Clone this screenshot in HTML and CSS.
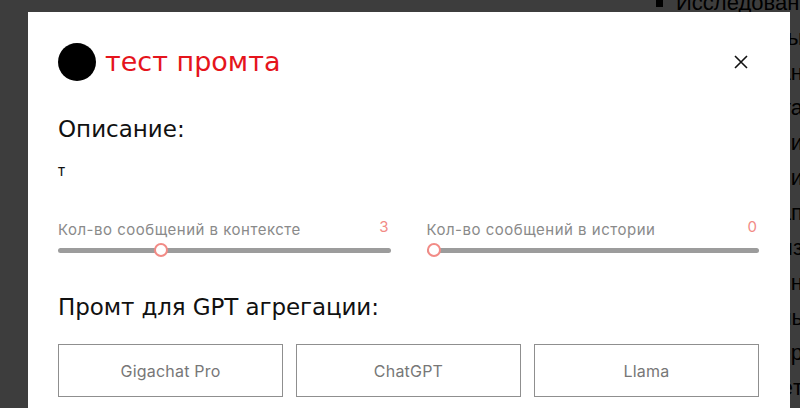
FILE: index.html
```html
<!DOCTYPE html>
<html lang="ru">
<head>
  <meta charset="UTF-8">
  <meta name="viewport" content="width=device-width, initial-scale=1.0">
  <title>тест промта</title>
  <link rel="stylesheet" href="styles.css">
</head>
<body>
  <div class="page">
    <ul class="page-list">
      <li>Исследование пользователей</li>
    </ul>
    <p>Формулируем вопросы</p>
    <p>Составляем план</p>
    <p>Определяем задачи проекта</p>
    <p>Проводим интервью и</p>
    <p>Сравниваем версии</p>
    <p>Выделяем ключевой этап</p>
    <p>Делаем анализ</p>
    <p>Готовим дизайн</p>
    <p>Фиксируем цель</p>
    <p>Формируем пример</p>
    <p>Описываем отчёт</p>
  </div>

  <div class="overlay">
    <div class="modal">
      <div class="modal-head">
        <span class="modal-dot"></span>
        <h2 class="modal-title">тест промта</h2>
        <button class="modal-close" aria-label="Закрыть">
          <svg width="14" height="14" viewBox="0 0 14 14">
            <path d="M1 1L13 13M13 1L1 13" stroke="#111" stroke-width="1.6" fill="none"/>
          </svg>
        </button>
      </div>

      <h3 class="section-title">Описание:</h3>
      <p class="desc">т</p>

      <div class="sliders">
        <label class="slider">
          <span class="slider-head">
            <span class="slider-label">Кол-во сообщений в контексте</span>
            <span class="slider-value">3</span>
          </span>
          <input type="range" min="0" max="10" value="3">
        </label>
        <label class="slider">
          <span class="slider-head">
            <span class="slider-label">Кол-во сообщений в истории</span>
            <span class="slider-value">0</span>
          </span>
          <input type="range" min="0" max="10" value="0">
        </label>
      </div>

      <h3 class="section-title section-title-gpt">Промт для GPT агрегации:</h3>
      <div class="models">
        <button>Gigachat Pro</button>
        <button>ChatGPT</button>
        <button>Llama</button>
      </div>
    </div>
  </div>
</body>
</html>
```

FILE: styles.css
```css
body {
  margin: 0;
  height: 408px;
  overflow: hidden;
  background: #fff;
  font-family: 'Liberation Sans', Arial, sans-serif;
}
.page {
  width: 803px;
  color: #000;
  font-size: 22px;
  line-height: 35px;
}
.page-list {
  margin: -15px 0 0 0;
  padding-left: 676px;
  list-style: square;
  white-space: nowrap;
}
.page p {
  margin: 0;
  text-align: right;
  white-space: nowrap;
}
.overlay {
  position: fixed;
  inset: 0;
  background: rgba(0, 0, 0, 0.76);
  padding: 12px 0 0 28px;
  overflow: hidden;
}
.modal {
  background: #fff;
  width: 762px;
  box-sizing: border-box;
  padding: 31px 31px 40px 30px;
}
.modal-head {
  display: flex;
  align-items: center;
  height: 38px;
}
.modal-dot {
  width: 38px;
  height: 38px;
  border-radius: 50%;
  background: #000;
  margin-right: 9px;
}
.modal-title {
  margin: 0;
  font-family: 'DejaVu Sans', sans-serif;
  font-weight: normal;
  font-size: 27px;
  line-height: 38px;
  color: #e5141c;
}
.modal-close {
  margin-left: auto;
  width: 36px;
  height: 36px;
  padding: 0;
  border: none;
  background: none;
  display: flex;
  align-items: center;
  justify-content: center;
  cursor: pointer;
}
.section-title {
  margin: 35px 0 0;
  font-family: 'DejaVu Sans', sans-serif;
  font-weight: normal;
  font-size: 23px;
  line-height: 27px;
  color: #111;
}
.section-title-gpt {
  margin-top: 37px;
  letter-spacing: -0.1px;
}
.desc {
  margin: 18px 0 0;
  font-family: Inter, sans-serif;
  font-size: 15px;
  line-height: 20px;
  color: #111;
}
.sliders {
  display: grid;
  grid-template-columns: 1fr 1fr;
  gap: 36px;
  margin-top: 39px;
}
.slider {
  display: block;
}
.slider-head {
  display: flex;
  justify-content: space-between;
  align-items: flex-start;
  margin-bottom: 3px;
  font-family: Inter, sans-serif;
  font-size: 15px;
  line-height: 20px;
}
.slider-label {
  color: #8a8a8a;
  letter-spacing: 0.5px;
}
.slider-value {
  color: #f28b86;
  margin-top: -3px;
  padding-right: 2px;
}
.slider input {
  -webkit-appearance: none;
  appearance: none;
  display: block;
  width: 100%;
  height: 14px;
  margin: 0;
  background: transparent;
}
.slider input::-webkit-slider-runnable-track {
  height: 5px;
  border-radius: 3px;
  background: #9c9c9c;
}
.slider input::-webkit-slider-thumb {
  -webkit-appearance: none;
  box-sizing: border-box;
  width: 14px;
  height: 14px;
  margin-top: -4.5px;
  border-radius: 50%;
  border: 2px solid #f28b86;
  background: #fff;
}
.models {
  display: grid;
  grid-template-columns: repeat(3, 1fr);
  gap: 13px;
  margin-top: 23px;
}
.models button {
  height: 53px;
  border: 1px solid #8f8f8f;
  background: #fff;
  font-family: Inter, sans-serif;
  font-size: 16px;
  letter-spacing: 0.2px;
  color: #777;
  cursor: pointer;
}
```
